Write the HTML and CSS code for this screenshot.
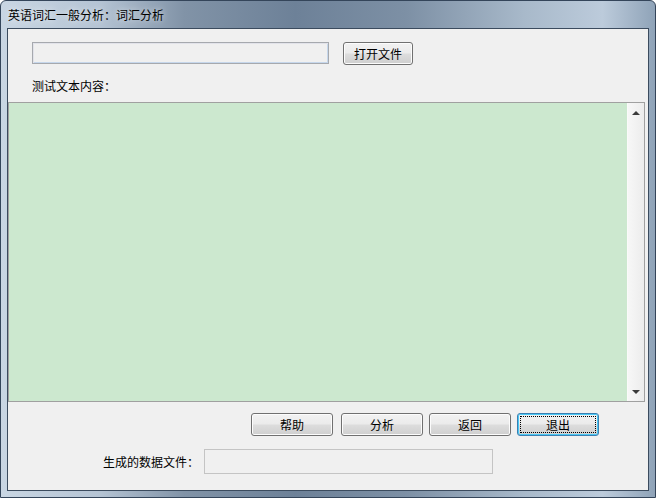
FILE: index.html
```html
<!DOCTYPE html>
<html lang="zh-CN">
<head>
    <meta charset="UTF-8">
    <title>英语词汇一般分析：词汇分析</title>
    <link rel="stylesheet" href="styles.css">
</head>
<body>
<div class="window">
    <div class="title-bar">英语词汇一般分析：词汇分析</div>
    <div class="client">
        <div class="file-row">
            <input class="text-input file-input" type="text">
            <button class="win-btn open-btn">打开文件</button>
        </div>
        <div class="content-label">测试文本内容：</div>
        <div class="text-box">
            <div class="text-area"></div>
            <div class="scrollbar">
                <span class="arrow arrow-up"></span>
                <span class="arrow arrow-down"></span>
            </div>
        </div>
        <div class="action-row">
            <button class="win-btn action-btn">帮助</button>
            <button class="win-btn action-btn">分析</button>
            <button class="win-btn action-btn">返回</button>
            <button class="win-btn action-btn focused"><span class="focus-ring">退出</span></button>
        </div>
        <div class="output-row">
            <span class="output-label">生成的数据文件：</span>
            <input class="text-input output-input" type="text" disabled>
        </div>
    </div>
</div>
</body>
</html>
```

FILE: styles.css
```css
body {
    margin: 0;
    background: #ffffff;
    font-family: "Noto Sans CJK SC", "DejaVu Sans", sans-serif;
    font-size: 12px;
    color: #000;
}
.window {
    width: 656px;
    height: 498px;
    box-sizing: border-box;
    border: 1px solid #34455a;
    border-radius: 6px 6px 0 0;
    background: linear-gradient(to right, #c9d6e3 0%, #b5c4d4 15%, #8193a7 28%, #6d8198 45%, #7d90a5 62%, #a8b9ca 80%, #bccbdb 92%, #8fa3b8 100%);
    display: flex;
    flex-direction: column;
    padding: 0 6px 6px 6px;
}
.title-bar {
    height: 27px;
    line-height: 27px;
    padding-left: 1px;
    color: #000;
    font-size: 12px;
    text-shadow: 0 0 6px rgba(255, 255, 255, 0.8);
}
.client {
    flex: 1;
    background: #f0f0f0;
    border: 1px solid #3b4b5e;
    display: flex;
    flex-direction: column;
}
.file-row {
    display: flex;
    align-items: flex-start;
    gap: 14px;
    margin-top: 13px;
    padding-left: 24px;
}
.text-input {
    box-sizing: border-box;
    margin: 0;
    background: #f0f0f0;
    font: inherit;
}
.file-input {
    width: 297px;
    height: 22px;
    border: 1px solid #a6a9ae;
    box-shadow: inset 1px 1px 0 #e2e3ea, inset -1px -1px 0 #c6d7ec;
}
.win-btn {
    box-sizing: border-box;
    height: 23px;
    margin: 0;
    padding: 0;
    border: 1px solid #707070;
    border-radius: 3px;
    background: linear-gradient(#f2f2f2 0%, #ebebeb 48%, #dddddd 52%, #cfcfcf 100%);
    box-shadow: inset 0 0 0 1px #fcfcfc;
    font: inherit;
    color: #000;
}
.open-btn {
    width: 70px;
}
.content-label {
    margin-top: 13px;
    padding-left: 24px;
    height: 16px;
    line-height: 16px;
}
.text-box {
    margin-top: 8px;
    width: 637px;
    height: 300px;
    box-sizing: border-box;
    border: 1px solid #a0a0a0;
    display: flex;
}
.text-area {
    flex: 1;
    background: #cce8cf;
}
.scrollbar {
    width: 17px;
    background: linear-gradient(to right, #f7f7f7, #ececec);
    border-left: 1px solid #fafafa;
    display: flex;
    flex-direction: column;
    justify-content: space-between;
    align-items: center;
    padding: 8px 0 7px;
    box-sizing: border-box;
}
.arrow {
    width: 0;
    height: 0;
    border-left: 4px solid transparent;
    border-right: 4px solid transparent;
}
.arrow-up {
    border-bottom: 4px solid #3a3a3a;
}
.arrow-down {
    border-top: 4px solid #3a3a3a;
}
.action-row {
    display: flex;
    margin-top: 11px;
    padding-left: 243px;
}
.action-btn {
    width: 82px;
    margin-right: 6px;
}
.action-btn:first-child {
    margin-right: 8px;
}
.focused {
    border-color: #3c7fb1;
    box-shadow: inset 0 0 0 1px #48c8f5;
    padding: 2px;
}
.focus-ring {
    display: block;
    height: 100%;
    box-sizing: border-box;
    border: 1px dotted #000;
    line-height: 15px;
}
.output-row {
    display: flex;
    align-items: center;
    margin-top: 13px;
    padding-left: 95px;
}
.output-label {
    width: 101px;
}
.output-input {
    width: 289px;
    height: 25px;
    border: 1px solid #c4c4c4;
}
```
